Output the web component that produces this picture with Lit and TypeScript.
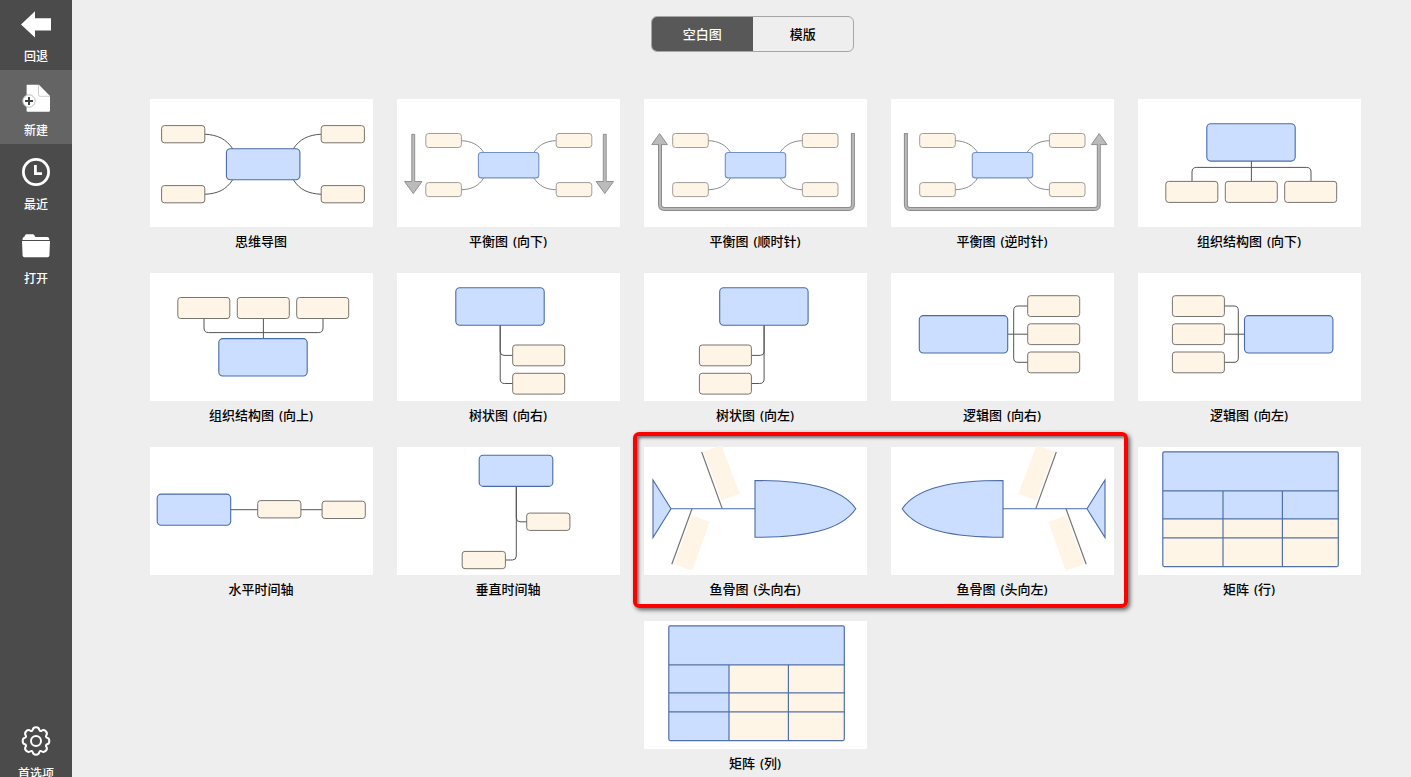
import { LitElement, html, svg, css, SVGTemplateResult } from "lit";
import { customElement, property } from "lit/decorators.js";

type Shape = SVGTemplateResult;

const main = (x: number, y: number, w: number, h: number, r = 4): Shape =>
  svg`<rect class="main" x=${x} y=${y} width=${w} height=${h} rx=${r}></rect>`;
const topic = (x: number, y: number, w: number, h: number, r = 2.8): Shape =>
  svg`<rect class="topic" x=${x} y=${y} width=${w} height=${h} rx=${r}></rect>`;
const line = (d: string): Shape => svg`<path class="line" d=${d}></path>`;

const balance = (dx: number): Shape => svg`<g class="soft">
  ${line(`M64.5 41.7C75 42 82 46 87 53.5M64.5 90.7C75 90.4 82 87 87 78.8M${159 - dx} 41.7C${149 - dx} 42 ${142 - dx} 46 ${137 - dx} 53.5M${159 - dx} 90.7C${149 - dx} 90.4 ${142 - dx} 87 ${137 - dx} 78.8`)}
  ${topic(29, 34.5, 35.6, 14)}${topic(29, 83.6, 35.6, 14)}
  ${topic(159.4 - dx, 34.5, 35.6, 14)}${topic(159.4 - dx, 83.6, 35.6, 14)}
  ${main(81.6, 53.5, 60.4, 25.4, 3)}
</g>`;

const around = (): Shape => svg`
  <path class="track" d="M208.9 34V105.5Q208.9 110 204.4 110H20.5Q16 110 16 105.5V45"></path>
  <path class="track-core" d="M208.9 34.8V105.5Q208.9 110 204.4 110H20.5Q16 110 16 105.5V45"></path>
  <path class="arrow" d="M15.6 34.6L23.4 45.6H7.8Z"></path>
  <path class="track-core" d="M16 48V44"></path>`;

const fish = (): Shape => svg`
  <path class="bone" d="M59.3 4.3L77.7 -1.6L95.7 46.7L77.7 53.3Z"></path>
  <path class="bone" d="M47.7 68.3L65.7 75L48.3 123.8L30 117.3Z"></path>
  <path class="rib" d="M57.7 5L78.2 61.6M48 61.8L27.8 117.3"></path>
  <path class="main" d="M27 61.7H111M9 33L27 61.7L9 90.5Z"></path>
  <path class="main" d="M111 33.5C160 33.5 197 40 211.8 61.7C197 83.8 160 90.3 111 90.3Z"></path>`;

const grid = (): Shape => svg`<path class="grid" d="M24.8 43.8H200.3M24.8 71.9H200.3M24.8 90.9H200.3M85 43.8V119.6M144.4 43.8V119.6"></path>
  <rect class="grid" x="24.8" y="4.8" width="175.5" height="114.8" rx="1.5"></rect>`;

const charts: Array<{ name: string; art: Shape }> = [
  { name: "思维导图", art: svg`
    ${line("M54.8 35.2C68 36 76 40 82.7 49.7M54.8 95.3C68 94.5 76 91 82.7 80.7M171.2 35.2C158 36 150 40 143.3 49.7M171.2 95.3C158 94.5 150 91 143.3 80.7")}
    ${topic(11.6, 26.6, 43.2, 17.2)}${topic(11.6, 86.6, 43.2, 17.2)}${topic(171.2, 26.6, 43.2, 17.2)}${topic(171.2, 86.6, 43.2, 17.2)}
    ${main(76.4, 49.7, 73.5, 31)}` },
  { name: "平衡图 (向下)", art: svg`<g transform="translate(-.2 0)">${balance(0)}
    <path class="arrow" d="M15 35.3H17.9V82.5H25.2L16.5 94.5L7.8 82.5H15Z"></path>
    <path class="arrow" d="M206.5 35.3H209.4V82.5H216.7L208 94.5L199.3 82.5H206.5Z"></path></g>` },
  { name: "平衡图 (顺时针)", art: svg`<g transform="translate(-.3 0)">${balance(0.7)}</g>${around()}` },
  { name: "平衡图 (逆时针)", art: svg`<g transform="translate(-.3 0)">${balance(0.7)}</g><g transform="translate(223.8 0) scale(-1 1)">${around()}</g>` },
  { name: "组织结构图 (向下)", art: svg`
    ${line("M113.4 62V82M54 82V73Q54 68.4 58.6 68.4H168.4Q173 68.4 173 73V82")}
    ${main(68.8, 24.7, 88.4, 37.4)}${topic(27.8, 82.4, 52, 21)}${topic(87.3, 82.4, 52, 21)}${topic(146.7, 82.4, 52, 21)}` },
  { name: "组织结构图 (向上)", art: svg`
    ${line("M113.4 45V66M54 45V55Q54 59.6 58.6 59.6H168.4Q173 59.6 173 55V45")}
    ${main(68.8, 65.6, 88.4, 37.4)}${topic(27.8, 24.5, 52, 21)}${topic(87.3, 24.5, 52, 21)}${topic(146.7, 24.5, 52, 21)}` },
  { name: "树状图 (向右)", art: svg`
    ${line("M103.2 52V78.5Q103.2 82.4 107 82.4H116")}${line("M103.2 52V106Q103.2 110.5 107.7 110.5H116")}
    ${main(58.8, 14.8, 88.4, 37.4)}${topic(115.7, 72, 52, 20.8)}${topic(115.7, 100.3, 52, 20.8)}` },
  { name: "树状图 (向左)", art: svg`
    ${line("M120.1 52V78.5Q120.1 82.4 116.3 82.4H107")}${line("M120.1 52V106Q120.1 110.5 115.6 110.5H107")}
    ${main(75.7, 14.8, 88.4, 37.4)}${topic(55.4, 72, 52, 20.8)}${topic(55.4, 100.3, 52, 20.8)}` },
  { name: "逻辑图 (向右)", art: svg`
    ${line("M116.5 61.2H137M137 33H127Q122.7 33 122.7 37.3V85Q122.7 89.3 127 89.3H137")}
    ${main(28.3, 42.6, 88.4, 37.4)}${topic(136.7, 22.7, 52, 20.8)}${topic(136.7, 50.8, 52, 20.8)}${topic(136.7, 79, 52, 20.8)}` },
  { name: "逻辑图 (向左)", art: svg`
    ${line("M86 61.2H106.5M86 33H96Q100.3 33 100.3 37.3V85Q100.3 89.3 96 89.3H86")}
    ${main(106.5, 42.6, 88.4, 37.4)}${topic(34.4, 22.7, 52, 20.8)}${topic(34.4, 50.8, 52, 20.8)}${topic(34.4, 79, 52, 20.8)}` },
  { name: "水平时间轴", art: svg`
    ${line("M80 62.7H172")}
    ${main(7.2, 47.1, 73.5, 31.2)}${topic(107.7, 53.6, 43.2, 17.3)}${topic(172.1, 54.2, 43.2, 17.3)}` },
  { name: "垂直时间轴", art: svg`
    ${line("M119.3 39V71Q119.3 74.8 123 74.8H130")}${line("M119.3 39V109Q119.3 113 115.3 113H108")}
    ${main(82.2, 8.2, 73.6, 31.2)}${topic(129.7, 66.1, 43.2, 17.3)}${topic(65.2, 104.4, 43.2, 17.3)}` },
  { name: "鱼骨图 (头向右)", art: fish() },
  { name: "鱼骨图 (头向左)", art: svg`<g transform="translate(223 0) scale(-1 1)">${fish()}</g>` },
  { name: "矩阵 (行)", art: svg`
    <rect class="cream" x="24.8" y="4.8" width="175.5" height="114.8" rx="1.5"></rect>
    <rect class="blue" x="24.8" y="4.8" width="175.5" height="67.1"></rect>${grid()}` },
  { name: "矩阵 (列)", art: svg`
    <rect class="cream" x="24.8" y="4.8" width="175.5" height="114.8" rx="1.5"></rect>
    <rect class="blue" x="24.8" y="4.8" width="175.5" height="39"></rect>
    <rect class="blue" x="24.8" y="43.8" width="60.2" height="75.8"></rect>${grid()}` },
];

@customElement("chart-card")
class ChartCard extends LitElement {
  @property() name = "";
  @property({ attribute: false }) art: Shape = svg``;

  static styles = css`
    :host { display: flex; flex-direction: column; width: 223px; height: 174px; }
    .art { display: block; width: 223px; height: 128px; background: #fff; overflow: visible; flex: none; }
    .name {
      height: 28px; line-height: 28px; padding-right: 1px; text-align: center;
      font-size: 13px; word-spacing: 1.5px; color: #000; white-space: nowrap;
    }
    .main { fill: #cbdeff; stroke: #4a6ba8; stroke-width: 1.1; }
    .topic { fill: #fff5e6; stroke: #77746f; stroke-width: 1; }
    .line { fill: none; stroke: #555; stroke-width: 1; }
    .soft .main { stroke: #7590c4; }
    .soft .topic { stroke: #a09d98; }
    .soft .line { stroke: #8c8c8c; }
    .arrow { fill: #bbb; stroke: #909090; stroke-width: 1; }
    .track { fill: none; stroke: #8c8c8c; stroke-width: 4; }
    .track-core { fill: none; stroke: #b8b8b8; stroke-width: 2; }
    .bone { fill: #fff5e6; }
    .rib { fill: none; stroke: #777; stroke-width: 1.2; }
    .grid { fill: none; stroke: #5271a8; stroke-width: 1.2; }
    .cream { fill: #fff5e6; }
    .blue { fill: #cbdeff; }
  `;

  render() {
    return html`<svg class="art" viewBox="0 0 223 128">${this.art}</svg>
      <div class="name">${this.name}</div>`;
  }
}

const icons = {
  back: svg`<path fill="#fff" d="M0 14.4L14 1.2V8.2H30V20.6H14V27.6Z"></path>`,
  create: svg`<path fill="#fff" d="M6 .8H18L29 12V26.5Q29 27.8 27.7 27.8H6.5Q5.6 27.8 5.6 27V1.5Q5.6 .8 6 .8Z"></path>
    <path fill="none" stroke="#ccc" d="M17.5 1V10.5Q17.5 12.3 19.3 12.3H29"></path>
    <path fill="#646464" d="M18.3 0H30V12Z"></path>
    <circle cx="8" cy="17" r="6.2" fill="#fff" stroke="#bbb" stroke-width="1"></circle>
    <path stroke="#3c4646" stroke-width="2" d="M4 17H12M8 13V21"></path>`,
  recent: svg`<circle cx="15" cy="14" r="12.6" fill="none" stroke="#fff" stroke-width="2.8"></circle>
    <path fill="none" stroke="#fff" stroke-width="2.8" d="M14.4 7V15.6H21"></path>`,
  open: svg`<path fill="#fff" d="M1.6 8V6.8Q1.6 5.2 3.2 5.1L4.2 3Q4.6 2.2 5.6 2.2H11.8Q12.6 2.2 13.2 3L14.4 4.9H26.2Q28 4.9 28.2 6.8V8Z"></path>
    <path fill="#fff" d="M1 9H29L28.4 23.5Q28.3 25.2 26.6 25.2H3.4Q1.7 25.2 1.6 23.5Z"></path>`,
  prefs: svg`<path fill="none" stroke="#fff" stroke-width="2" stroke-linejoin="round"
      d="M11.7 3.8C12.2 .3 17.8 .3 18.3 3.8C18.7 5.1 19.7 5.4 20.6 4.7C23.5 2.7 27.3 6.5 25.3 9.4C24.6 10.3 24.9 11.3 26.2 11.7C29 12.2 29 17.8 26.2 18.3C24.9 18.7 24.6 19.7 25.3 20.6C27.3 23.5 23.5 27.3 20.6 25.3C19.7 24.6 18.7 24.9 18.3 26.2C17.8 29.7 12.2 29.7 11.7 26.2C11.3 24.9 10.3 24.6 9.4 25.3C6.5 27.3 2.7 23.5 4.7 20.6C5.4 19.7 5.1 18.7 3.8 18.3C1 17.8 1 12.2 3.8 11.7C5.1 11.3 5.4 10.3 4.7 9.4C2.7 6.5 6.5 2.7 9.4 4.7C10.3 5.4 11.3 5.1 11.7 3.8Z"
      transform="translate(0 -1)"></path>
    <circle cx="15" cy="14" r="5" fill="none" stroke="#fff" stroke-width="2"></circle>`,
};

@customElement("app-root")
class AppRoot extends LitElement {
  static styles = css`
    :host {
      display: flex; position: relative; width: 100%; height: 100vh; overflow: hidden; background: #eee;
      font-family: "Noto Sans", "Noto Sans CJK SC", sans-serif; font-size: 13px; font-weight: 500;
    }
    .side { width: 72px; flex: none; background: #4b4b4b; display: flex; flex-direction: column; color: #fff; }
    .item {
      box-sizing: border-box; height: 74px; flex: none; padding-top: 14px;
      display: flex; flex-direction: column; align-items: center; font-size: 12px;
    }
    .item.first { height: 70px; padding-top: 10px; }
    .item.on { background: #646464; }
    .item.last { margin-top: auto; height: 64px; }
    .item svg { width: 30px; height: 28px; flex: none; overflow: visible; }
    .item span { line-height: 20px; margin-top: 9px; }
    .page { flex: 1; display: flex; flex-direction: column; padding-top: 16px; }
    .tabs {
      box-sizing: border-box; flex: none; display: flex; width: 203px; height: 36px; margin-left: 579px;
      border: 1px solid #a6a6a6; border-radius: 6px; overflow: hidden; line-height: 34px; text-align: center;
    }
    .tab { flex: 1; color: #000; }
    .tab.on { background: #585858; color: #fff; }
    .charts {
      display: flex; flex-wrap: wrap; justify-content: center; column-gap: 24px; flex: none;
      width: 1211px; margin: 47px 0 0 78px;
    }
    .mark {
      position: absolute; left: 633px; top: 432px; width: 487px; height: 168px;
      border: 4px solid #f00; border-radius: 6px;
      box-shadow: 2px 2px 4px rgba(0,0,0,.6), inset 2px 2px 3px rgba(0,0,0,.5);
      pointer-events: none;
    }
  `;

  render() {
    return html`
      <nav class="side">
        <div class="item first"><svg viewBox="0 0 30 28">${icons.back}</svg><span>回退</span></div>
        <div class="item on"><svg viewBox="0 0 30 28">${icons.create}</svg><span>新建</span></div>
        <div class="item"><svg viewBox="0 0 30 28">${icons.recent}</svg><span>最近</span></div>
        <div class="item"><svg viewBox="0 0 30 28">${icons.open}</svg><span>打开</span></div>
        <div class="item last"><svg viewBox="0 0 30 28">${icons.prefs}</svg><span>首选项</span></div>
      </nav>
      <main class="page">
        <div class="tabs"><div class="tab on">空白图</div><div class="tab">模版</div></div>
        <div class="charts">
          ${charts.map((c) => html`<chart-card .name=${c.name} .art=${c.art}></chart-card>`)}
        </div>
      </main>
      <div class="mark"></div>
    `;
  }
}
